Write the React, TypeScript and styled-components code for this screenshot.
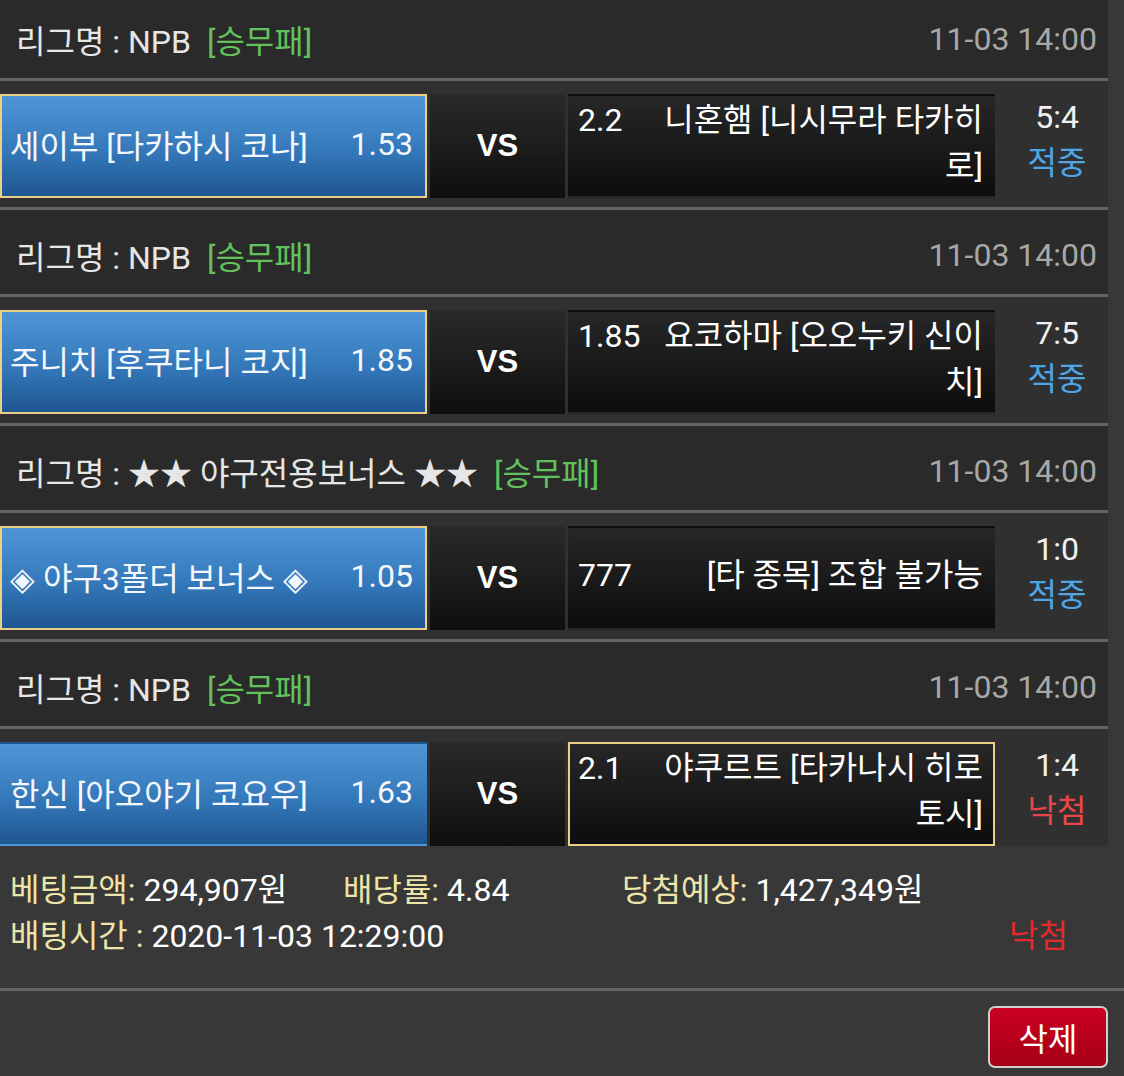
import React from "react";
import styled, { createGlobalStyle } from "styled-components";

const GlobalStyle = createGlobalStyle`
  body {
    margin: 0;
    background: #383838;
    font-family: Roboto, "Noto Sans CJK KR", sans-serif;
  }
`

const Page = styled.div`
  width: 1124px;
  min-height: 1076px;
  background: #383838;
  overflow: hidden;
  color: #ffffff;
  font-size: 32px;
`

const List = styled.div`
  width: 1108px;
  margin-top: -6px;
`

const Header = styled.div`
  height: 78px;
  padding: 6px 11px 0 16px;
  display: flex;
  align-items: center;
  justify-content: space-between;
  background: #2a2a2a;
  border-bottom: 3px solid #646464;
  color: #e6e6e6;
  white-space: nowrap;
`

const League = styled.span`
  display: flex;
  align-items: center;
`

const Kind = styled.span`
  color: #62c15c;
  margin-left: 16px;
`

const Time = styled.span`
  color: #a8a8a8;
`

const Row = styled.div<{ $last?: boolean }>`
  display: grid;
  grid-template-columns: 427px 135px 427px 1fr;
  column-gap: 3px;
  padding: 13px 0 ${({ $last }) => ($last ? "0" : "9px")};
  background: #303030;
  border-bottom: ${({ $last }) => ($last ? "none" : "3px solid #646464")};
`

const Home = styled.div<{ $picked: boolean }>`
  height: 104px;
  box-sizing: border-box;
  display: flex;
  align-items: center;
  justify-content: space-between;
  padding: 0 12px 5px 8px;
  background: linear-gradient(to bottom, #4f96d7 0%, #3478ba 55%, #1f5690 100%);
  border: 2px solid ${({ $picked }) => ($picked ? "#ecd088" : "transparent")};
  white-space: nowrap;
  color: #f4f8fc;
`

const Versus = styled.div`
  height: 104px;
  display: flex;
  align-items: center;
  justify-content: center;
  background: linear-gradient(to bottom, #2a2a2a, #0f0f0f);
  font-family: "Liberation Sans", Arial, sans-serif;
  font-weight: 700;
  font-size: 31px;
`

const Away = styled.div<{ $picked: boolean }>`
  height: 104px;
  box-sizing: border-box;
  display: flex;
  align-items: center;
  padding: 0 10px 6px 8px;
  background: linear-gradient(to bottom, #272727, #0d0d0d);
  border: 2px solid ${({ $picked }) => ($picked ? "#ecd088" : "transparent")};
`

const AwayInner = styled.div`
  display: flex;
  align-items: flex-start;
  width: 100%;
  line-height: 46px;
`

const Odds = styled.span`
  width: 64px;
  flex: none;
`

const Name = styled.span`
  flex: 1;
  text-align: right;
`

const Score = styled.div`
  display: flex;
  flex-direction: column;
  align-items: center;
  padding-left: 8px;
  line-height: 46px;
  color: #f0f0f0;
`

const Result = styled.span<{ $hit: boolean }>`
  color: ${({ $hit }) => ($hit ? "#4ea6e6" : "#e8474a")};
`

const Info = styled.div`
  padding: 21px 56px 29px 10px;
  line-height: 46px;
  background: #383838;
  white-space: nowrap;
`

const InfoTop = styled.div`
  display: grid;
  grid-template-columns: 333px 279px 1fr;
`

const InfoBottom = styled.div`
  display: flex;
  justify-content: space-between;
`

const Label = styled.span`
  color: #ede4a8;
`

const Lost = styled.span`
  color: #e42a2a;
`

const Footer = styled.div`
  display: flex;
  justify-content: flex-end;
  padding: 15px 16px 0 0;
  border-top: 3px solid #646464;
`

const DeleteButton = styled.button`
  width: 120px;
  height: 62px;
  box-sizing: border-box;
  background: linear-gradient(to bottom, #c9001f, #a70017);
  border: 2px solid #cfcfcf;
  border-radius: 7px;
  color: #ffffff;
  font-family: inherit;
  font-size: 32px;
  cursor: pointer;
`

type Match = {
  league: string
  time: string
  home: string
  homeOdds: string
  away: string
  awayOdds: string
  pick: "home" | "away"
  score: string
  hit: boolean
}

const matches: Match[] = [
  { league: "리그명 : NPB", time: "11-03 14:00", home: "세이부 [다카하시 코나]", homeOdds: "1.53", away: "니혼햄 [니시무라 타카히로]", awayOdds: "2.2", pick: "home", score: "5:4", hit: true },
  { league: "리그명 : NPB", time: "11-03 14:00", home: "주니치 [후쿠타니 코지]", homeOdds: "1.85", away: "요코하마 [오오누키 신이치]", awayOdds: "1.85", pick: "home", score: "7:5", hit: true },
  { league: "리그명 : ★★ 야구전용보너스 ★★", time: "11-03 14:00", home: "◈ 야구3폴더 보너스 ◈", homeOdds: "1.05", away: "[타 종목] 조합 불가능", awayOdds: "777", pick: "home", score: "1:0", hit: true },
  { league: "리그명 : NPB", time: "11-03 14:00", home: "한신 [아오야기 코요우]", homeOdds: "1.63", away: "야쿠르트 [타카나시 히로토시]", awayOdds: "2.1", pick: "away", score: "1:4", hit: false },
]

const App = () => {
  return (
    <Page>
      <GlobalStyle />
      <List>
        {matches.map((m, i) => (
          <div key={i}>
            <Header>
              <League>
                {m.league}
                <Kind>[승무패]</Kind>
              </League>
              <Time>{m.time}</Time>
            </Header>
            <Row $last={i === matches.length - 1}>
              <Home $picked={m.pick === "home"}>
                <span>{m.home}</span>
                <span>{m.homeOdds}</span>
              </Home>
              <Versus>VS</Versus>
              <Away $picked={m.pick === "away"}>
                <AwayInner>
                  <Odds>{m.awayOdds}</Odds>
                  <Name>{m.away}</Name>
                </AwayInner>
              </Away>
              <Score>
                <span>{m.score}</span>
                <Result $hit={m.hit}>{m.hit ? "적중" : "낙첨"}</Result>
              </Score>
            </Row>
          </div>
        ))}
      </List>
      <Info>
        <InfoTop>
          <span><Label>베팅금액:</Label> 294,907원</span>
          <span><Label>배당률:</Label> 4.84</span>
          <span><Label>당첨예상:</Label> 1,427,349원</span>
        </InfoTop>
        <InfoBottom>
          <span><Label>배팅시간 :</Label> 2020-11-03 12:29:00</span>
          <Lost>낙첨</Lost>
        </InfoBottom>
      </Info>
      <Footer>
        <DeleteButton>삭제</DeleteButton>
      </Footer>
    </Page>
  )
}

export default App
